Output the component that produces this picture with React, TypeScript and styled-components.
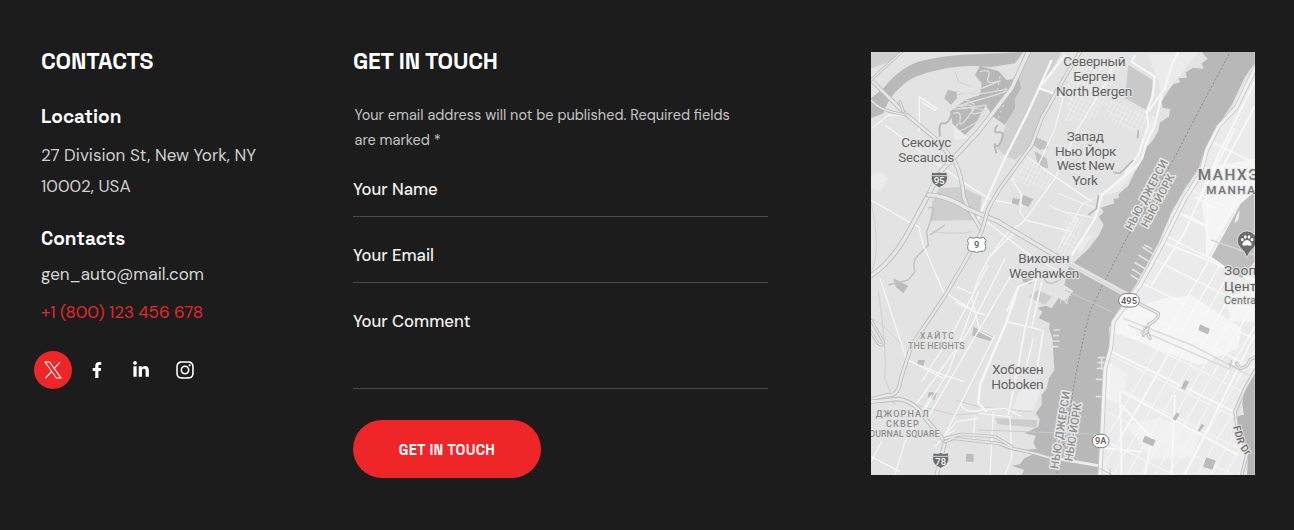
import React from "react";
import styled, { createGlobalStyle } from "styled-components";
import { FaFacebookF, FaLinkedinIn, FaInstagram } from "react-icons/fa";

const GlobalStyle = createGlobalStyle`
  *, *::before, *::after { box-sizing: border-box; }
  body { margin: 0; background: #1c1c1c; font-family: "DM Sans", Inter, sans-serif; }
`;

const Footer = styled.footer`
  display: grid;
  grid-template-columns: 312px 415px 487px;
  justify-content: start;
  height: 530px;
  padding: 45px 39px 0 41px;
  background: #1c1c1c;
  color: #fff;
  overflow: hidden;
`;

const Column = styled.section`
  display: flex;
  flex-direction: column;
  align-items: flex-start;
`;

const Title = styled.h2`
  margin: 0;
  font: 700 23px/32px "Space Grotesk", Roboto, sans-serif;
  letter-spacing: -0.2px;
  white-space: nowrap;
`;

const SubTitle = styled.h3<{ $top: number }>`
  margin: ${(p) => p.$top}px 0 0;
  font: 600 19px/24px "Space Grotesk", Inter, sans-serif;
  letter-spacing: 0;
`;

const Address = styled.p`
  margin: 11px 0 0;
  font-size: 17px;
  line-height: 31px;
  color: #cfcfcf;
  white-space: nowrap;
`;

const ContactLink = styled.a<{ $top: number; $accent?: boolean }>`
  margin-top: ${(p) => p.$top}px;
  font-size: 17px;
  line-height: 24px;
  letter-spacing: ${(p) => (p.$accent ? -0.07 : 0)}px;
  color: ${(p) => (p.$accent ? "#e3282a" : "#d6d6d6")};
  text-decoration: none;
`;

const Socials = styled.nav`
  display: flex;
  gap: 6px;
  margin: 27px 0 0 -7px;
`;

const SocialLink = styled.a<{ $active?: boolean }>`
  display: flex;
  align-items: center;
  justify-content: center;
  width: 38px;
  height: 38px;
  border-radius: 50%;
  color: #fff;
  background: ${(p) => (p.$active ? "#ee2628" : "transparent")};
`;

const Note = styled.p`
  margin: 26px 0 0 1.5px;
  font-size: 14.5px;
  line-height: 25px;
  color: #c4c4c4;
  white-space: nowrap;
`;

const Field = styled.label<{ $height: number; $top?: number }>`
  display: block;
  width: 100%;
  height: ${(p) => p.$height}px;
  padding-top: ${(p) => p.$top ?? 26}px;
  border-bottom: 1px solid #4a4a4a;
  font-size: 16.7px;
  line-height: 24px;
  font-weight: 500;
  color: #f0f0f0;
`;

const Submit = styled.button`
  width: 188px;
  height: 58px;
  margin-top: 31px;
  padding: 1px 0 0;
  border: 0;
  border-radius: 29px;
  background: #ee2628;
  color: #fff;
  font: 700 14.5px/20px "Space Grotesk", Roboto, sans-serif;
  letter-spacing: 0.3px;
`;

const MapFrame = styled.div`
  width: 384px;
  height: 423px;
  margin: 7px 0 0 103px;
  background: #e3e3e3;
  overflow: hidden;
`;

const MapSvg = styled.svg`
  display: block;
  width: 384px;
  height: 423px;
  font-family: Roboto, sans-serif;
`;

const XLogo = () => (
  <svg width="18" height="18" viewBox="0 0 18 18" fill="none" stroke="#fff" strokeWidth="1.1">
    <path d="M1 1H5.6L17 17H12.4ZM16 1L9.9 7.8M8 10.1L1.5 17" />
  </svg>
);

/* Geometry, in map units (3 per pixel). */
const HUDSON =
  "M1010 21L1028 42L1010 55L1016 72L985 68L962 82L965 98L940 100L946 112L925 118L905 145L890 170L893 188L915 192L912 215L885 232L880 258L862 288L845 305L835 340L810 380L790 422L760 448L762 460L745 462L748 475L708 488L716 500L702 515L716 540L702 570L670 612L640 640L610 670L598 720L625 738L600 768L580 760L560 790L542 782L518 788L532 800L522 820L555 835L552 850L562 880L566 940L568 975L552 1000L545 1030L530 1050L530 1080L512 1105L524 1122L520 1145L478 1165L512 1172L505 1195L515 1212L480 1215L510 1225L478 1240L465 1258L440 1262L478 1275L470 1289L700 1289L704 1190L712 1100L716 1000L722 950L735 900L732 850L750 810L775 775L815 715L850 650L880 595L920 500L960 430L1000 372L1030 290L1060 240L1100 180L1140 95L1169 55V21Z";
const MANHATTAN =
  "M1169 60L1140 110L1100 190L1060 250L1030 300L1005 375L960 440L920 510L880 600L850 660L815 725L775 785L745 830L738 905L725 950L718 1100L704 1289H1145L1150 1215L1125 1160L1110 1115L1130 1050L1169 985Z";

type RoadProps = { d: string; w?: number; edge?: string; fill?: string };
const Highway = ({ d, w = 13, edge = "#bcbcbc", fill = "#e7e7e7" }: RoadProps) => (
  <g fill="none" strokeLinejoin="round" strokeLinecap="round">
    <path d={d} stroke={edge} strokeWidth={w} />
    <path d={d} stroke={fill} strokeWidth={w - 5} />
  </g>
);
const Street = ({ d, w = 5 }: RoadProps) => (
  <path d={d} fill="none" stroke="#f6f6f6" strokeWidth={w} strokeLinejoin="round" />
);

type LabelProps = { x: number; y: number; len?: number; size?: number; color?: string; weight?: number; turn?: number; halo?: number; children: string };
const Label = ({ x, y, len, size = 41, color = "#626262", weight = 400, turn = 0, halo = 6, children }: LabelProps) => (
  <text
    transform={`translate(${x} ${y}) rotate(${turn})`}
    fontSize={size}
    fontWeight={weight}
    fill={color}
    stroke="#e6e6e6"
    strokeWidth={halo}
    strokeLinejoin="round"
    paintOrder="stroke"
    textLength={len}
  >
    {children}
  </text>
);

const Interstate = ({ x, y, n }: { x: number; y: number; n: string }) => (
  <g transform={`translate(${x} ${y})`}>
    <path d="M-22-23Q-11-18 0-23Q11-18 22-23Q28 0 18 12Q10 19 0 24Q-10 19-18 12Q-28 0-22-23Z" fill="#6c6c6c" stroke="#f1f1f1" strokeWidth="2" />
    <path d="M-23-12H23" stroke="#e8e8e8" strokeWidth="2.5" />
    <text y="13" textAnchor="middle" fontSize="28" fontWeight="500" fill="#fff">{n}</text>
  </g>
);
const RouteOval = ({ x, y, w, n }: { x: number; y: number; w: number; n: string }) => (
  <g transform={`translate(${x} ${y})`}>
    <rect x={-w / 2} y="-20" width={w} height="40" rx="20" fill="#fff" stroke="#808080" strokeWidth="3" />
    <text y="10" textAnchor="middle" fontSize="28" fontWeight="500" fill="#5c5c5c">{n}</text>
  </g>
);

const range = (from: number, to: number, step: number) => {
  const out: number[] = [];
  for (let v = from; v <= to; v += step) out.push(v);
  return out;
};

const CityMap = () => (
  <MapSvg viewBox="18 21 1152 1269" role="img" aria-label="Map">
    <defs>
      <clipPath id="manhattan"><path d={MANHATTAN} /></clipPath>
      <clipPath id="bergen"><path d="M700 160L850 200L830 270L750 240ZM615 60L770 60L690 220L600 230ZM600 510L660 520L625 640L580 620ZM480 330L570 390L540 440L430 400Z" /></clipPath>
    </defs>
    <rect x="18" y="21" width="1152" height="1269" fill="#e3e3e3" />

    {/* Meadowlands */}
    <path d="M18 21H110L70 52L18 70Z" fill="#cfcfcf" />
    <path d="M480 21H590L530 130L480 240L430 340L395 310L440 200L450 110Z" fill="#d0d0d0" />
    <path d="M530 130L565 150L500 300L450 345L430 335Z" fill="#d0d0d0" />
    <path d="M18 220V160L55 130Q110 60 180 45T330 28L475 21L450 55L380 66Q290 58 225 74Q140 90 108 125Q70 155 55 205Z" fill="#b9b9b9" />
    <path d="M345 62L400 78L425 105L462 100L468 130L450 160L450 190L420 240L385 215L362 180L330 240L300 270L265 245L255 200L300 165L345 150L350 115L330 90Z" fill="#b8b8b8" />
    <g fill="none" stroke="#dcdcdc" strokeWidth="4">
      <path d="M345 80Q380 70 370 95T395 110T350 130T385 140T340 165T365 180M265 205Q290 195 285 225T310 215T300 180T330 190T320 240T280 235M300 165Q340 175 325 195T355 200" />
      <path d="M405 95L395 145M415 180L400 220M420 130L440 140" strokeDasharray="6 12" />
    </g>
    <path d="M248 135L275 140L276 160L258 180L238 160Z" fill="#bcbcbc" />
    <path d="M262 200Q250 240 235 235T225 275M398 240Q380 265 400 262T410 285T392 300T395 325" fill="none" stroke="#bababa" strokeWidth="6" />
    <path d="M270 80L280 110L320 125M270 150L300 145" fill="none" stroke="#c4c4c4" strokeWidth="2" />
    <path d="M195 528L202 470L222 430L290 425L350 455L345 500L325 525Z" fill="#cecece" />
    <path d="M510 275L545 290L550 310L525 315L505 300ZM508 318L545 340L550 370L520 365Z" fill="#c2c2c2" />
    <path d="M475 450L505 462L490 486L467 475ZM443 460L465 462L460 480L440 475ZM325 845L385 875L375 888L322 872ZM160 945H180L174 965L155 960ZM192 1040L216 1045L208 1066L188 1055ZM303 1227H326V1250H303ZM85 700L130 722L115 745L92 725ZM470 700L505 700L498 718L475 712Z" fill="#bcbcbc" />
    <path d="M790 60L862 105L865 145L845 195L780 160Z" fill="#c9c9c9" />
    <path d="M18 390L45 380L70 400L45 440L18 430ZM260 235L310 280L270 285ZM850 30L1000 21L930 110L890 150L870 80ZM860 210L880 220L840 330L800 390L760 440L720 450L830 330ZM640 590L690 560L640 630ZM470 1010L525 1040L505 1095L440 1100Z" fill="#ebebeb" />
    <path d="M490 755L520 735L560 755L540 780ZM390 1120L515 1125L515 1148L400 1138Z" fill="#cccccc" />
    <path d="M18 470Q50 620 18 680M40 740Q65 900 60 1000L90 1080M200 560Q280 570 320 560M18 820Q60 840 110 900M270 1065L340 1085L500 1100M130 1075L270 1110L340 1105" fill="none" stroke="#d0d0d0" strokeWidth="3" />
    <path d="M190 490Q210 480 205 500T185 560L190 600L160 630Q140 650 150 680L130 705L70 720M240 540L195 570" fill="none" stroke="#c0c0c0" strokeWidth="4" />

    {/* New Jersey residential blocks */}
    <g clipPath="url(#bergen)" stroke="#eeeeee" strokeWidth="2.5">
      {range(0, 900, 14).map((v) => <path key={v} d={`M${v + 200} 21L${v - 120} 660`} />)}
      {range(-400, 700, 17).map((v) => <path key={v} d={`M300 ${v}L900 ${v + 290}`} />)}
    </g>

    {/* Local streets */}
    <Street d="M163 258V155L215 190L210 196L170 172M22 250L70 210L125 212M60 240L200 345L300 415L380 465L440 475" w={4} />
    <Street d="M18 465L130 530L160 545L175 600L235 740L330 800M45 700L125 945L240 992L300 1010" w={4} />
    <Street d="M560 45L490 200L420 340L330 540M600 30L522 130L595 155" w={7} />
    <Street d="M455 555L370 640L340 700L320 760L345 860L385 880M370 640L430 560L470 535L480 525L570 400L640 250L730 100L750 40" w={4} />
    <Street d="M480 330L570 395L680 470M440 400L470 450L465 500L480 525L620 560M595 155L570 250L520 360M620 45L600 100" w={4} />
    <Street d="M365 530L480 620L600 690M420 640L310 860L130 1110M370 660L270 850L170 1010M450 670L190 1115M340 740L250 980L170 1110M390 870L240 1170" w={4} />
    <Street d="M130 945L235 1000M270 770L330 800L360 810M275 725L320 745M200 1050L120 1190L90 1289M18 1235L105 1280M50 1190L18 1250" w={4} />
    <Street d="M425 830L530 855M425 800L460 725L540 690M530 710L500 850M515 700L480 850L460 960L430 1110M535 855L515 980M475 880L440 1060" w={5} />
    <Street d="M505 880L480 980M285 1075Q300 1110 350 1095L420 1090L470 1115M340 1105L435 1115L440 1240L420 1289M385 1100L375 1289M330 1110L325 1190M210 1205L275 1130L340 1120M245 1170L270 1155" w={4} />
    <Street d="M460 725L425 830L370 960L345 1020L340 1075L365 1100" w={8} />
    <Street d="M810 30L800 50L870 95L862 155L845 200L850 240L820 330L780 385M850 200L900 130L920 60L940 21M890 150L870 240L845 290L830 350L710 450L690 520L640 600L620 630" w={7} />
    <Street d="M580 445L690 490M600 500L690 520M550 480L640 520L600 600M740 430L650 480L580 610" w={3} />
    <path d="M745 382L765 385L805 345M700 450L695 490L670 510M820 255L818 280" fill="none" stroke="#b8b8b8" strokeWidth="5" />

    {/* Hudson and Manhattan */}
    <path d={HUDSON} fill="#b8b8b8" />
    <path d={MANHATTAN} fill="#ebebeb" />
    <g clipPath="url(#manhattan)">
      <path d="M1060 360L1180 340V570L1120 480L1030 620L1010 480ZM900 760L980 750L1130 850L1120 910L1000 960L850 900L740 860L760 800ZM730 950L790 990L760 1080L720 1060ZM780 1140L880 1120L1010 1160L980 1240L860 1240ZM1080 760L1169 730V830L1100 830Z" fill="#f5f5f5" />
      <g stroke="#f8f8f8" strokeWidth="4.5" fill="none">
        {range(660, 1560, 42).map((v) => <path key={v} d={`M${v} 1289L${v + 620} 215`} />)}
        {range(120, 1300, 88).map((v) => <path key={v} d={`M700 ${v}L1180 ${v + 240}`} />)}
      </g>
      <path d="M750 870L1180 1040L1110 1289H704Z" fill="#ebebeb" opacity="0.35" />
      <g stroke="#f8f8f8" strokeWidth="6" fill="none">
        <path d="M1169 110L1060 330L960 560L860 720M1169 185L1060 390M1110 250L1000 470M890 590L1040 650L1169 710M990 455L1050 490M960 510L1030 545M1030 470L1025 635L1169 360M740 920L1169 1130M770 1040L1120 1230M765 1040L770 1289M770 1080L860 1180L840 1289M720 1210L830 1220M1000 770L760 1190M930 1050L920 1289M1169 870L960 1289" />
      </g>
      <path d="M1169 440L1128 475L1040 635L1130 700L1169 650Z" fill="#bfbfbf" />
      <path d="M1038 585L1169 630" fill="none" stroke="#d6d6d6" strokeWidth="4" />
      <path d="M1115 510L1125 495L1120 525L1108 535Z" fill="#eeeeee" />
      <path d="M775 820L850 850L980 900L1150 990M790 840L1100 975" fill="none" stroke="#dddddd" strokeWidth="5" />
      <path d="M1005 838L1035 852L1029 868L1000 855ZM960 1005L972 1010L960 1035L948 1030ZM934 1102L944 1108L932 1127L923 1122ZM840 1172L872 1186L864 1204L832 1190ZM1024 1237L1052 1247L1042 1274L1014 1265ZM1010 1137L1018 1141L1005 1160L998 1157Z" fill="#bbbbbb" />
    </g>
    <path d="M1169 985L1135 1045L1130 1110L1110 1118L1125 1160L1150 1215L1146 1289H1169Z" fill="#b5b5b5" />
    <path d="M1130 1070L1137 1110H1125Z" fill="#e5e5e5" />
    <g fill="none" stroke="#e2e2e2" strokeWidth="5">
      <path d="M838 600L862 612M832 606L865 628M820 630L850 648M808 652L842 672M802 672L835 694M798 690L825 708M698 938H720M698 953H720M695 970H718M692 1003H718M710 935V975M692 1055H715M566 855H584M564 872H582M562 888H584M560 905H580" />
      <path d="M590 740L618 752M585 760L610 775M600 735L585 775M615 742L602 778" strokeWidth="3" />
      <path d="M600 735L745 803M340 1155L700 1168" strokeWidth="3" stroke="#cccccc" />
    </g>
    <path d="M1092 27L1000 200L925 345L850 480L790 570L715 715L675 800L655 880L630 1000L610 1130L575 1289" fill="none" stroke="#8a8a8a" strokeWidth="3" strokeDasharray="6 6" />

    {/* Highways */}
    <Highway d="M490 21L440 130L340 260L222 385L190 450L125 570Q80 650 18 692" w={15} />
    <Highway d="M18 105L120 205L210 280L270 350Q290 390 296 455L310 490L350 555" w={13} />
    <Highway d="M18 165Q45 200 120 208M110 21L18 105M105 170L115 200" w={9} />
    <Highway d="M190 450Q240 450 310 492L400 530L500 590L620 660" w={15} />
    <Highway d="M645 21L600 95L530 220L500 300L405 430L370 490L350 560L300 650L235 760Q175 850 140 900L108 1000Q100 1055 70 1050L18 1062" w={12} />
    <Highway d="M18 1070L100 1062Q150 1068 185 1125L240 1190L215 1289" w={13} />
    <Highway d="M240 1190L265 1180L400 1195L440 1210L510 1225L560 1240M240 1180L290 1168L390 1175L440 1205" w={10} />
    <path d="M560 1238L700 1262" stroke="#eeeeee" strokeWidth="8" />
    <Highway d="M18 825L55 890Q52 910 35 890L18 860" w={9} />
    <path d="M600 648L790 752" stroke="#e3e3e3" strokeWidth="16" />
    <path d="M600 650L785 752" stroke="#cdcdcd" strokeWidth="2" />
    <Highway d="M790 760L880 805Q885 820 850 840L845 860" w={10} />
    <path d="M535 695Q545 725 575 710T570 690" fill="none" stroke="#c2c2c2" strokeWidth="4" />
    <Highway d="M1180 50L1115 185L1060 245L1025 315L1005 390L960 460L890 600L825 720L745 830L737 910L720 970L705 1289" w={14} edge="#c8c8c8" fill="#f2f2f2" />
    <Highway d="M1172 975L1140 1030L1110 1100L1118 1160L1148 1220L1128 1300" w={11} />
    <Highway d="M1172 935L1155 945Q1145 970 1125 970L1115 955M850 850L835 870M840 850L855 880" w={10} />
    <path d="M825 865L845 848M832 875L855 860M1090 955L1115 970M1100 945L1095 970M705 1270L740 1289M735 1270V1289" stroke="#c2c2c2" strokeWidth="3" />

    <Label x={595} y={64} len={187}>Северный</Label>
    <Label x={625} y={108} len={127}>Берген</Label>
    <Label x={573} y={153} len={229}>North Bergen</Label>
    <Label x={109} y={307} len={150}>Секокус</Label>
    <Label x={100} y={352} len={168}>Secaucus</Label>
    <Label x={605} y={287} len={112}>Запад</Label>
    <Label x={570} y={332} len={184}>Нью Йорк</Label>
    <Label x={575} y={375} len={174}>West New</Label>
    <Label x={622} y={419} len={77}>York</Label>
    <Label x={460} y={653} len={154}>Вихокен</Label>
    <Label x={432} y={698} len={211}>Weehawken</Label>
    <Label x={381} y={987} len={155}>Хобокен</Label>
    <Label x={379} y={1032} len={157}>Hoboken</Label>
    <Label x={165} y={881} len={102} size={26} color="#929292" weight={500}>ХАЙТС</Label>
    <Label x={129} y={912} len={170} size={27} color="#929292" weight={500}>THE HEIGHTS</Label>
    <Label x={32} y={1115} len={159} size={27} color="#8c8c8c" weight={500}>ДЖОРНАЛ</Label>
    <Label x={63} y={1145} len={98} size={27} color="#8c8c8c" weight={500}>СКВЕР</Label>
    <Label x={12} y={1175} len={212} size={27} color="#8c8c8c" weight={500}>OURNAL SQUARE</Label>
    <Label x={998} y={405} len={182} size={46} color="#747474" weight={500}>МАНХЭ</Label>
    <Label x={1024} y={446} len={146} size={35} color="#747474" weight={500}>MANHA</Label>
    <Label x={1077} y={689} len={97} size={41}>Зооп</Label>
    <Label x={1077} y={737} len={97} size={41}>Цент</Label>
    <Label x={1077} y={776} len={96} size={32} color="#707070">Centra</Label>
    <Label x={800} y={558} len={234} size={34} color="#8f8f8f" weight={500} turn={-62} halo={9}>НЬЮ-ДЖЕРСИ</Label>
    <Label x={847} y={550} len={176} size={34} color="#8f8f8f" weight={500} turn={-62} halo={9}>НЬЮ-ЙОРК</Label>
    <Label x={579} y={1273} len={235} size={34} color="#8f8f8f" weight={500} turn={-81} halo={9}>НЬЮ-ДЖЕРСИ</Label>
    <Label x={622} y={1250} len={176} size={34} color="#8f8f8f" weight={500} turn={-81} halo={9}>НЬЮ-ЙОРК</Label>
    <Label x={1104} y={1145} len={56} size={31} color="#6a6a6a" weight={500} turn={74}>FDR</Label>
    <Label x={1125} y={1209} len={30} size={31} color="#6a6a6a" weight={500} turn={52}>Dr</Label>

    <Interstate x={223} y={404} n="95" />
    <Interstate x={227} y={1246} n="78" />
    <g transform="translate(335 599)">
      <path d="M-20-23L-12-19Q0-24 12-19L20-23L28-13Q22-4 27 5Q28 20 16 20Q8 19 0 24Q-8 19-16 20Q-28 20-27 5Q-22-4-28-13Z" fill="#fff" stroke="#808080" strokeWidth="3" />
      <text y="11" textAnchor="middle" fontSize="28" fontWeight="500" fill="#5c5c5c">9</text>
    </g>
    <RouteOval x={792} y={766} w={62} n="495" />
    <RouteOval x={707} y={1188} w={50} n="9A" />
    <g transform="translate(1146 588)">
      <path d="M0 50Q-5 33-20 20A29 29 0 1 1 20 20Q5 33 0 50Z" fill="#6c6c6c" stroke="#eee" strokeWidth="2" />
      <g fill="#fff">
        <path d="M0-3Q8-3 12 5Q18 14 7 14Q0 11-7 14Q-18 14-12 5Q-8-3 0-3Z" />
        <ellipse cx="-14" cy="-4" rx="4" ry="5" />
        <ellipse cx="-5" cy="-12" rx="4" ry="5.5" />
        <ellipse cx="6" cy="-12" rx="4" ry="5.5" />
        <ellipse cx="15" cy="-4" rx="4" ry="5" />
      </g>
    </g>
  </MapSvg>
);

export default function App() {
  return (
    <>
      <GlobalStyle />
      <Footer>
        <Column>
          <Title>CONTACTS</Title>
          <SubTitle $top={28}>Location</SubTitle>
          <Address>
            27 Division St, New York, NY
            <br />
            10002, USA
          </Address>
          <SubTitle $top={25}>Contacts</SubTitle>
          <ContactLink $top={11}>gen_auto@mail.com</ContactLink>
          <ContactLink $top={14} $accent>+1 (800) 123 456 678</ContactLink>
          <Socials>
            <SocialLink $active aria-label="X"><XLogo /></SocialLink>
            <SocialLink aria-label="Facebook"><FaFacebookF size={16} /></SocialLink>
            <SocialLink aria-label="LinkedIn"><FaLinkedinIn size={18} /></SocialLink>
            <SocialLink aria-label="Instagram"><FaInstagram size={20} /></SocialLink>
          </Socials>
        </Column>
        <Column>
          <Title>GET IN TOUCH</Title>
          <Note>
            Your email address will not be published. Required fields
            <br />
            are marked *
          </Note>
          <Field $height={64} $top={24}>Your Name</Field>
          <Field $height={66}>Your Email</Field>
          <Field $height={106}>Your Comment</Field>
          <Submit type="button">GET IN TOUCH</Submit>
        </Column>
        <MapFrame>
          <CityMap />
        </MapFrame>
      </Footer>
    </>
  );
}
